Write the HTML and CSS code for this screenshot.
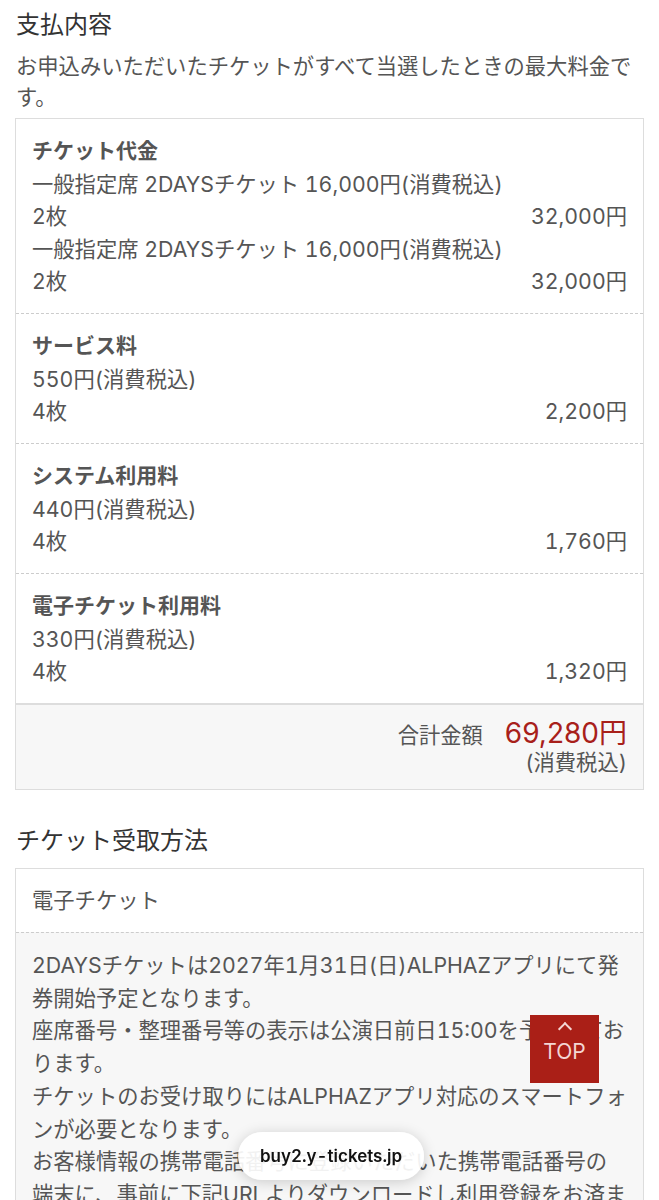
FILE: index.html
```html
<!DOCTYPE html>
<html lang="ja">
<head>
    <meta charset="UTF-8">
    <meta name="viewport" content="width=device-width, initial-scale=1.0">
    <title>支払内容</title>
    <link rel="stylesheet" href="styles.css">
</head>
<body>

    <section class="block">
        <h2 class="block-title">支払内容</h2>
        <p class="lead">お申込みいただいたチケットがすべて当選したときの最大料金です。</p>

        <div class="panel">
            <div class="fee">
                <h3 class="fee-name">チケット代金</h3>
                <p>一般指定席 2DAYSチケット 16,000円(消費税込)</p>
                <div class="fee-row"><span>2枚</span><span>32,000円</span></div>
                <p>一般指定席 2DAYSチケット 16,000円(消費税込)</p>
                <div class="fee-row"><span>2枚</span><span>32,000円</span></div>
            </div>
            <div class="fee">
                <h3 class="fee-name">サービス料</h3>
                <p>550円(消費税込)</p>
                <div class="fee-row"><span>4枚</span><span>2,200円</span></div>
            </div>
            <div class="fee">
                <h3 class="fee-name">システム利用料</h3>
                <p>440円(消費税込)</p>
                <div class="fee-row"><span>4枚</span><span>1,760円</span></div>
            </div>
            <div class="fee">
                <h3 class="fee-name">電子チケット利用料</h3>
                <p>330円(消費税込)</p>
                <div class="fee-row"><span>4枚</span><span>1,320円</span></div>
            </div>
            <div class="total">
                <div class="total-row">
                    <span class="total-label">合計金額</span>
                    <span class="total-price">69,280円</span>
                </div>
                <div class="total-tax">(消費税込)</div>
            </div>
        </div>
    </section>

    <section class="block">
        <h2 class="block-title">チケット受取方法</h2>
        <div class="panel">
            <div class="method">電子チケット</div>
            <div class="method-note">
                <p>2DAYSチケットは2027年1月31日(日)ALPHAZアプリにて発券開始予定となります。</p>
                <p>座席番号・整理番号等の表示は公演日前日15:00を予定しております。</p>
                <p>チケットのお受け取りにはALPHAZアプリ対応のスマートフォンが必要となります。</p>
                <p>お客様情報の携帯電話番号に登録いただいた携帯電話番号の端末に、事前に下記URLよりダウンロードし利用登録をお済ませください。</p>
            </div>
        </div>
    </section>

    <a href="#" class="to-top"><span class="to-top-arrow"></span>TOP</a>

    <div class="url-bar">buy2.y-tickets.jp</div>

</body>
</html>
```

FILE: styles.css
```css
* {
    box-sizing: border-box;
}

body {
    margin: 0;
    padding: 0 16px;
    font-family: "Inter", "Noto Sans CJK JP", sans-serif;
    font-size: 21.3px;
    font-variant-numeric: tabular-nums;
    color: #555;
    background-color: #fff;
}

p {
    margin: 0;
}

.block-title {
    margin: 0;
    padding-top: 7px;
    font-size: 24px;
    font-weight: normal;
    line-height: 36px;
    color: #333;
}

.block + .block {
    margin-top: 26px;
}

.lead {
    margin-top: 8px;
    line-height: 31px;
}

.panel {
    margin: 5px -1px 0;
    border: 1px solid #ddd;
}

.block-title + .panel {
    margin-top: 9px;
}

.fee {
    padding: 16px 16px 15.5px;
    line-height: 32.5px;
}

.fee + .fee {
    border-top: 1px dashed #ccc;
}

.fee-name {
    margin: 0;
    font-size: 21px;
    font-weight: bold;
    line-height: 32.5px;
}

.fee-row {
    display: flex;
    justify-content: space-between;
}

/* total block */
.total {
    padding: 12px 16px 14px;
    border-top: 2px solid #ddd;
    background-color: #f7f7f7;
    text-align: right;
}

.total-row {
    display: flex;
    justify-content: flex-end;
    align-items: baseline;
    gap: 22px;
    height: 32px;
    line-height: 32px;
}

.total-label {
    line-height: 32px;
}

.total-price {
    font-size: 28px;
    font-variant-numeric: normal;
    line-height: 32px;
    color: #a8201a;
}

.total-tax {
    line-height: 26px;
}

/* receiving method */
.method {
    padding: 15px 16px 16px;
    line-height: 32px;
}

.method-note {
    padding: 16px;
    border-top: 1px dashed #ccc;
    background-color: #f7f7f7;
    line-height: 32.7px;
}

/* overlays */
.to-top {
    position: fixed;
    right: 60px;
    top: 1015px;
    width: 69px;
    height: 68px;
    display: flex;
    flex-direction: column;
    align-items: center;
    padding-top: 3px;
    background-color: #aa1f17;
    color: #f4d6d4;
    font-size: 21px;
    line-height: 24px;
    text-decoration: none;
}

.to-top-arrow {
    width: 10px;
    height: 10px;
    margin-top: 6px;
    margin-bottom: 6px;
    border-top: 2px solid #f4d6d4;
    border-left: 2px solid #f4d6d4;
    transform: rotate(45deg);
}

.url-bar {
    position: fixed;
    left: 238px;
    top: 1132px;
    width: 186px;
    height: 48px;
    border-radius: 24px;
    background-color: rgba(255, 255, 255, 0.92);
    box-shadow: 0 2px 14px rgba(0, 0, 0, 0.18);
    font-family: "Inter", "Liberation Sans", sans-serif;
    font-size: 17px;
    font-weight: 600;
    line-height: 48px;
    color: #111;
    text-align: center;
}
```
